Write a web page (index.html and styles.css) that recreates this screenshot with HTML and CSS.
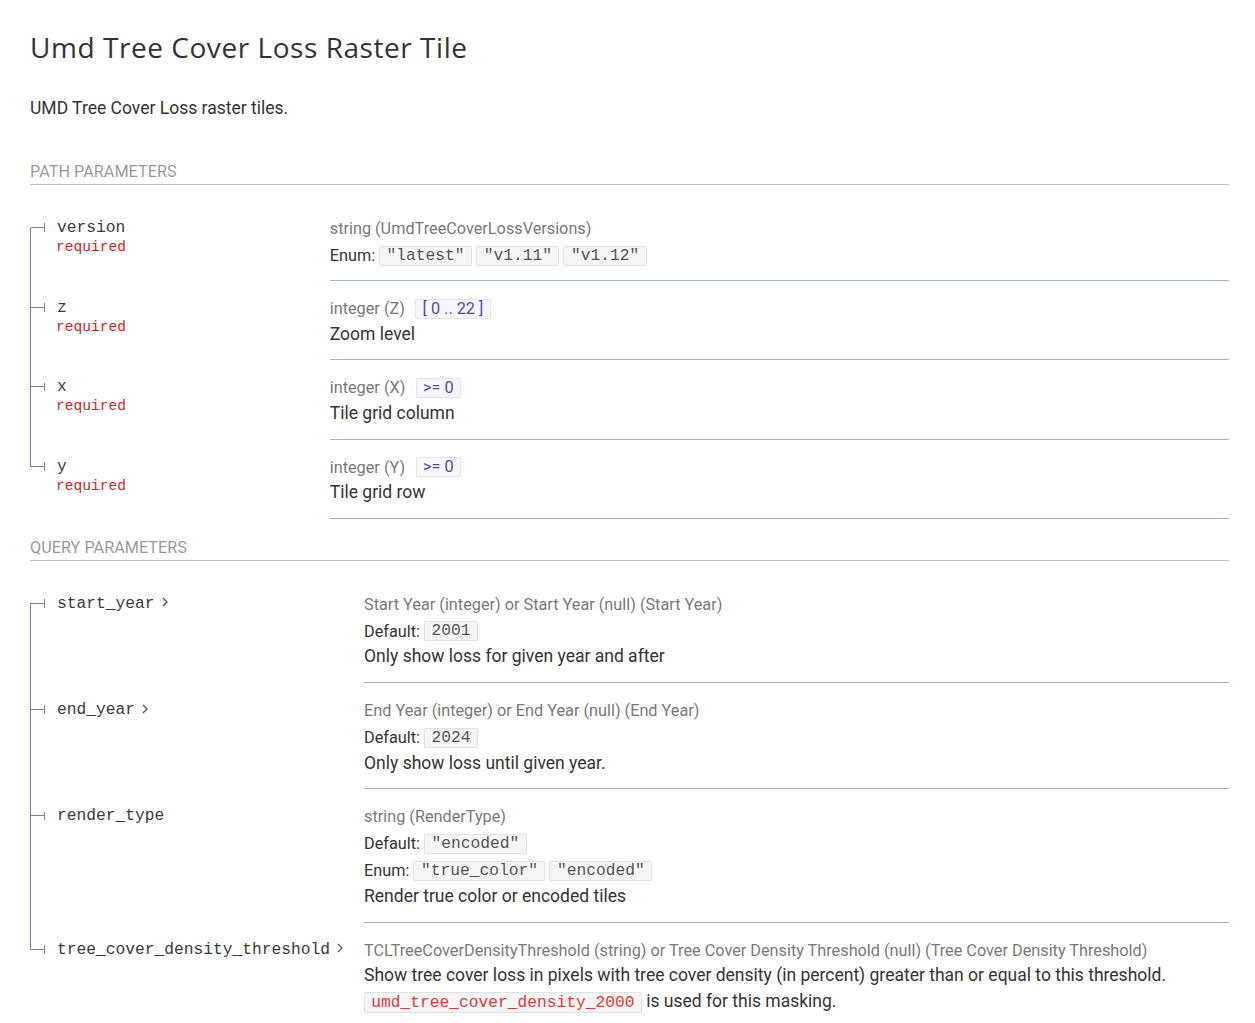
FILE: index.html
```html
<!DOCTYPE html>
<html lang="en">
<head>
<meta charset="utf-8">
<title>Umd Tree Cover Loss Raster Tile</title>
<link rel="stylesheet" href="styles.css">
</head>
<body>
<main class="page">
  <h1 class="title">Umd Tree Cover Loss Raster Tile</h1>
  <p class="intro">UMD Tree Cover Loss raster tiles.</p>

  <h5 class="section-head">Path Parameters</h5>
  <table class="params">
    <tbody>
      <tr class="first">
        <td class="pname"><span class="bullet"></span><span class="name">version</span><div class="required">required</div></td>
        <td class="pdetails">
          <div class="typeline"><span class="type">string (UmdTreeCoverLossVersions)</span></div>
          <div class="field"><span class="label">Enum:</span><code class="val">"latest"</code><code class="val">"v1.11"</code><code class="val">"v1.12"</code></div>
        </td>
      </tr>
      <tr>
        <td class="pname"><span class="bullet"></span><span class="name">z</span><div class="required">required</div></td>
        <td class="pdetails">
          <div class="typeline"><span class="type">integer (Z)</span><span class="constraint">[ 0 .. 22 ]</span></div>
          <div class="desc">Zoom level</div>
        </td>
      </tr>
      <tr>
        <td class="pname"><span class="bullet"></span><span class="name">x</span><div class="required">required</div></td>
        <td class="pdetails">
          <div class="typeline"><span class="type">integer (X)</span><span class="constraint">&gt;= 0</span></div>
          <div class="desc">Tile grid column</div>
        </td>
      </tr>
      <tr class="last">
        <td class="pname"><span class="bullet"></span><span class="name">y</span><div class="required">required</div></td>
        <td class="pdetails">
          <div class="typeline"><span class="type">integer (Y)</span><span class="constraint">&gt;= 0</span></div>
          <div class="desc">Tile grid row</div>
        </td>
      </tr>
    </tbody>
  </table>

  <h5 class="section-head">Query Parameters</h5>
  <table class="params">
    <tbody>
      <tr class="first">
        <td class="pname"><span class="bullet"></span><span class="name">start_year</span><svg class="chev" viewBox="0 0 24 24" aria-hidden="true"><polygon points="17.3 8.3 12 13.6 6.7 8.3 5.3 9.7 12 16.4 18.7 9.7" transform="rotate(-90 12 12)"/></svg></td>
        <td class="pdetails">
          <div class="typeline"><span class="type">Start Year (integer) or Start Year (null) (Start Year)</span></div>
          <div class="field"><span class="label">Default:</span><code class="val">2001</code></div>
          <div class="desc">Only show loss for given year and after</div>
        </td>
      </tr>
      <tr>
        <td class="pname"><span class="bullet"></span><span class="name">end_year</span><svg class="chev" viewBox="0 0 24 24" aria-hidden="true"><polygon points="17.3 8.3 12 13.6 6.7 8.3 5.3 9.7 12 16.4 18.7 9.7" transform="rotate(-90 12 12)"/></svg></td>
        <td class="pdetails">
          <div class="typeline"><span class="type">End Year (integer) or End Year (null) (End Year)</span></div>
          <div class="field"><span class="label">Default:</span><code class="val">2024</code></div>
          <div class="desc">Only show loss until given year.</div>
        </td>
      </tr>
      <tr>
        <td class="pname"><span class="bullet"></span><span class="name">render_type</span></td>
        <td class="pdetails">
          <div class="typeline"><span class="type">string (RenderType)</span></div>
          <div class="field"><span class="label">Default:</span><code class="val">"encoded"</code></div>
          <div class="field"><span class="label">Enum:</span><code class="val">"true_color"</code><code class="val">"encoded"</code></div>
          <div class="desc">Render true color or encoded tiles</div>
        </td>
      </tr>
      <tr class="last">
        <td class="pname"><span class="bullet"></span><span class="name">tree_cover_density_threshold</span><svg class="chev" viewBox="0 0 24 24" aria-hidden="true"><polygon points="17.3 8.3 12 13.6 6.7 8.3 5.3 9.7 12 16.4 18.7 9.7" transform="rotate(-90 12 12)"/></svg></td>
        <td class="pdetails">
          <div class="typeline"><span class="type">TCLTreeCoverDensityThreshold (string) or Tree Cover Density Threshold (null) (Tree Cover Density Threshold)</span></div>
          <div class="desc">Show tree cover loss in pixels with tree cover density (in percent) greater than or equal to this threshold. <code class="icode">umd_tree_cover_density_2000</code> is used for this masking.</div>
        </td>
      </tr>
    </tbody>
  </table>
</main>
</body>
</html>
```
FILE: styles.css
```css
* { box-sizing: border-box; }
html, body { margin: 0; padding: 0; background: #ffffff; }
body {
  font-family: Roboto, "Noto Sans", sans-serif;
  color: #333333;
}
.page {
  padding: 30px 26px 0 30px;
}
.title {
  margin: 0;
  font-family: "Open Sans", sans-serif;
  font-weight: 400;
  font-size: 28px;
  line-height: 35px;
  letter-spacing: 0.55px;
  color: #333333;
}
.intro {
  margin: 30px 0 0;
  font-size: 17.5px;
  line-height: 26.25px;
}
.section-head {
  margin: 37.75px 0 16px;
  font-size: 16.25px;
  line-height: 25px;
  font-weight: 400;
  text-transform: uppercase;
  color: rgba(38, 50, 56, 0.5);
  border-bottom: 1px solid rgba(38, 50, 56, 0.3);
}
.params + .section-head { margin-top: 16px; }

.params {
  width: 100%;
  border-collapse: separate;
  border-spacing: 0;
}
.pname {
  vertical-align: top;
  white-space: nowrap;
  padding: 14px 12.5px 12.5px 0;
  line-height: 25px;
  font-family: "Liberation Mono", "DejaVu Sans Mono", monospace;
  font-size: 16.25px;
  color: #3a3a3a;
  border-left: 1px solid #7c7cbb;
}
tr.first > .pname {
  border-left-color: transparent;
  background: linear-gradient(to bottom, transparent 0, transparent 26.5px, #7c7cbb 26.5px, #7c7cbb 100%) left top / 1px 100% no-repeat border-box;
}
tr.last > .pname {
  border-left-color: transparent;
  background: linear-gradient(to bottom, #7c7cbb 0, #7c7cbb 27px, transparent 27px, transparent 100%) left top / 1px 100% no-repeat border-box;
}
.bullet {
  margin-right: 12.5px;
}
.bullet::before {
  content: "";
  display: inline-block;
  vertical-align: middle;
  width: 12.5px;
  height: 1px;
  background: #7c7cbb;
}
.bullet::after {
  content: "";
  display: inline-block;
  vertical-align: middle;
  width: 1px;
  height: 8.75px;
  background: #7c7cbb;
}
.required {
  color: #d41f1c;
  font-size: 14.625px;
  line-height: 1;
  margin-left: 25px;
}
.chev {
  width: 16px;
  height: 16px;
  vertical-align: middle;
  margin: -2px 3.5px 0 2px;
  fill: #555555;
}

.pdetails {
  width: 75%;
  vertical-align: top;
  padding: 16.5px 0 12.5px;
  border-bottom: 1px solid #9fb4be;
}
tr.first .field:last-child { margin-bottom: 1px; }
.typeline {
  display: flex;
  align-items: center;
  height: 22px;
  font-size: 16.25px;
  color: rgba(102, 102, 102, 0.9);
  white-space: nowrap;
}
.constraint {
  margin-left: 10.5px;
  padding: 0 6.25px;
  font-size: 16.25px;
  line-height: 18px;
  border-radius: 2px;
  color: rgba(50, 50, 159, 0.9);
  background: rgba(80, 80, 200, 0.05);
  border: 1px solid rgba(50, 50, 159, 0.1);
}
.field {
  display: flex;
  align-items: center;
  gap: 4px;
  height: 22px;
  margin-top: 5px;
  font-size: 16.25px;
  color: #333333;
}
.val {
  font-family: "Liberation Mono", "DejaVu Sans Mono", monospace;
  font-size: 16.25px;
  line-height: 18px;
  padding: 0 6.5px;
  border-radius: 2px;
  color: rgba(51, 51, 51, 0.85);
  background: rgba(51, 51, 51, 0.05);
  border: 1px solid rgba(51, 51, 51, 0.1);
}
.desc {
  margin-top: 1px;
  font-size: 17.5px;
  line-height: 26.25px;
  color: #333333;
}
.icode {
  font-family: "Liberation Mono", "DejaVu Sans Mono", monospace;
  font-size: 16.25px;
  padding: 0 6.25px;
  border-radius: 2px;
  color: #e53935;
  background: rgba(38, 50, 56, 0.05);
  border: 1px solid rgba(38, 50, 56, 0.1);
}
```
